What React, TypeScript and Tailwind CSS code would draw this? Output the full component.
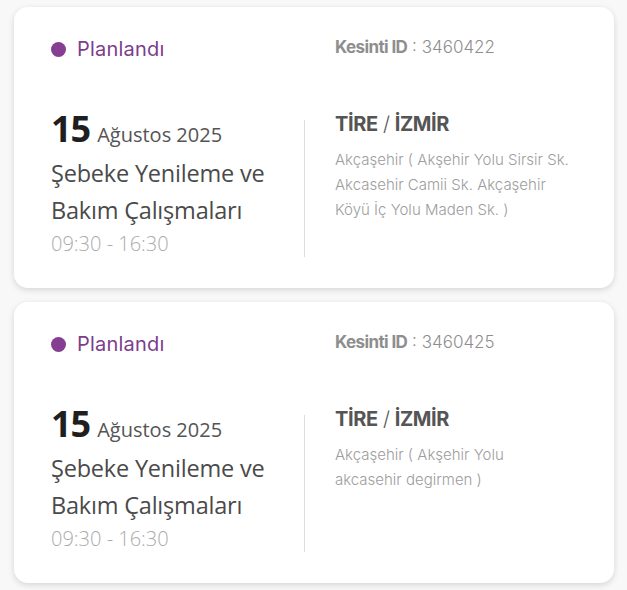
import React from "react";

type Outage = {
  id: string;
  day: string;
  monthYear: string;
  title: string;
  time: string;
  district: string;
  city: string;
  address: string;
};

const outages: Outage[] = [
  {
    id: "3460422",
    day: "15",
    monthYear: "Ağustos 2025",
    title: "Şebeke Yenileme ve Bakım Çalışmaları",
    time: "09:30 - 16:30",
    district: "TİRE",
    city: "İZMİR",
    address: "Akçaşehir ( Akşehir Yolu Sirsir Sk. Akcasehir Camii Sk. Akçaşehir Köyü İç Yolu Maden Sk. )",
  },
  {
    id: "3460425",
    day: "15",
    monthYear: "Ağustos 2025",
    title: "Şebeke Yenileme ve Bakım Çalışmaları",
    time: "09:30 - 16:30",
    district: "TİRE",
    city: "İZMİR",
    address: "Akçaşehir ( Akşehir Yolu akcasehir degirmen )",
  },
];

// kart bileşeni
const OutageCard: React.FC<{ item: Outage }> = ({ item }) => {
  return (
    <div className="w-[600px] rounded-[14px] bg-white pl-[37px] pr-[40px] pt-[28px] pb-[29px] shadow-[0_2px_6px_rgba(0,0,0,0.14)]">
      {/* üst satır: durum + kesinti id */}
      <div className="flex h-[28px] items-center font-['Inter',sans-serif]">
        <div className="flex w-[284px] items-center gap-[11px]">
          <span className="h-[15px] w-[15px] rounded-full bg-[#863e93]"></span>
          <span className="text-[20px] tracking-[0.2px] text-[#7d3d8d]">Planlandı</span>
        </div>
        <div className="-mt-[2px] text-[17px] text-[#8e8e8e]">
          <span className="font-bold tracking-[-0.6px]">Kesinti ID</span>
          <span className="font-light"> : {item.id}</span>
        </div>
      </div>

      {/* alt satır */}
      <div className="mt-[57px] flex items-start">
        <div className="-mt-[11px] w-[253px] font-['Open_Sans',sans-serif]">
          <div className="flex items-baseline gap-[7px] leading-[40px]">
            <span className="text-[36px] font-bold tracking-[-1px] text-[#1f1f1f]">{item.day}</span>
            <span className="text-[20px] text-[#555]">{item.monthYear}</span>
          </div>
          <div className="w-[245px] text-[23.5px] leading-[37px] tracking-[-0.2px] text-[#4a4a4a]">{item.title}</div>
          <div className="text-[20px] font-light leading-[30px] text-[#ababab]">{item.time}</div>
        </div>
        <div className="h-[137px] w-px bg-[#dcdcdc]"></div>
        <div className="-mt-[14px] flex-1 pl-[30px] font-['Inter',sans-serif]">
          <div className="text-[20px] leading-[36px] tracking-[-0.4px] text-[#555]">
            <span className="font-bold">{item.district}</span>
            <span className="font-light"> / </span>
            <span className="font-bold">{item.city}</span>
          </div>
          <div className="mt-[5px] text-[15px] font-light leading-[25px] text-[#9d9d9d]">{item.address}</div>
        </div>
      </div>
    </div>
  );
};

const App: React.FC = () => {
  return (
    <div className="flex min-h-screen flex-col gap-[14px] bg-[#f8f8f8] pl-[14px] pt-[7px]">
      {outages.map((o) => (
        <OutageCard key={o.id} item={o} />
      ))}
    </div>
  );
};

export default App;
